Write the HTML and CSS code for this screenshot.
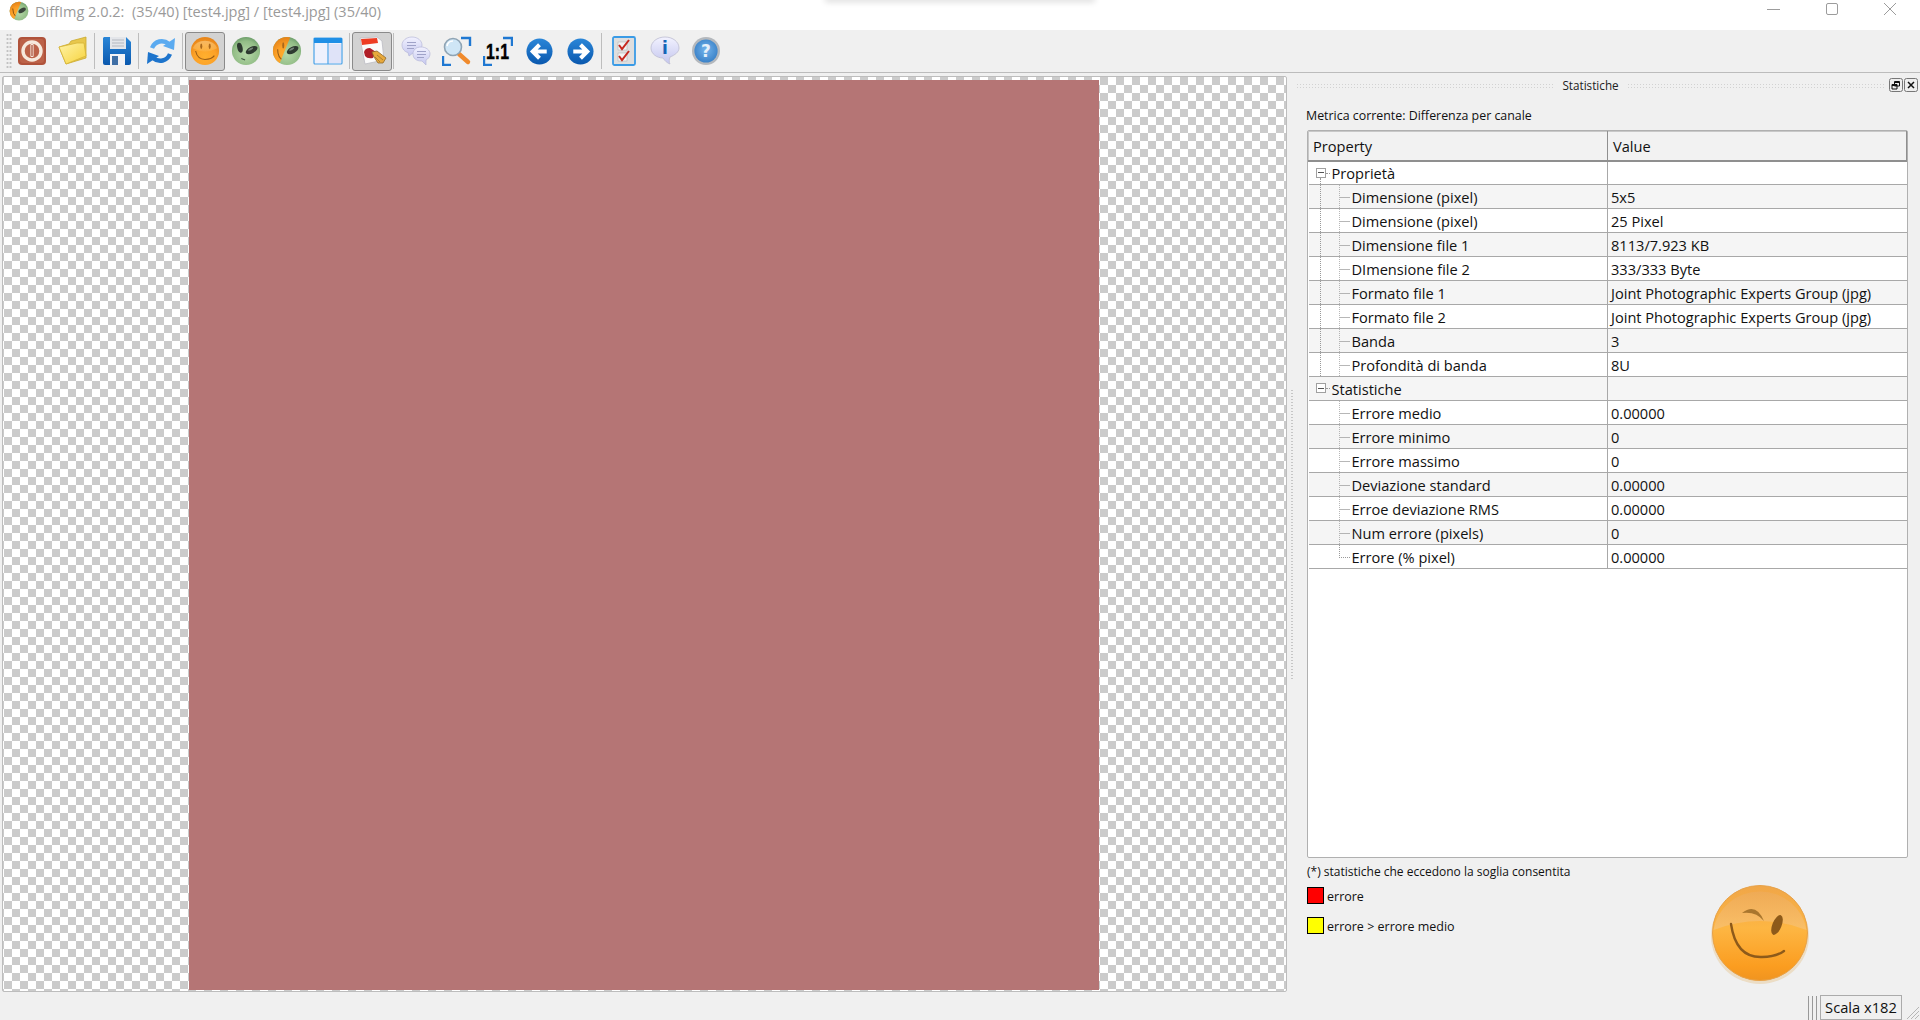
FILE: index.html
```html
<!DOCTYPE html>
<html lang="it">
<head>
<meta charset="utf-8">
<title>DiffImg</title>
<link rel="stylesheet" href="styles.css">
</head>
<body>
<svg class="defs" aria-hidden="true">
  <defs>
    <radialGradient id="gSmile" cx="50%" cy="70%" r="65%"><stop offset="0" stop-color="#ffb02e"/><stop offset=".6" stop-color="#fca128"/><stop offset="1" stop-color="#e8861a"/></radialGradient>
    <linearGradient id="gShine" x1="0" y1="0" x2="0" y2="1"><stop offset="0" stop-color="#fbd79a"/><stop offset="1" stop-color="#fbb44a"/></linearGradient>
    <radialGradient id="gAlien" cx="50%" cy="60%" r="65%"><stop offset="0" stop-color="#b6d8a8"/><stop offset=".7" stop-color="#92bd86"/><stop offset="1" stop-color="#5f9361"/></radialGradient>
    <linearGradient id="gFolder" x1="0" y1="0" x2="1" y2="1"><stop offset="0" stop-color="#fff3a8"/><stop offset="1" stop-color="#f7d33c"/></linearGradient>
    <linearGradient id="gBlue" x1="0" y1="0" x2="0" y2="1"><stop offset="0" stop-color="#2a86d8"/><stop offset="1" stop-color="#0a58ae"/></linearGradient>
    <linearGradient id="gLilac" x1="0" y1="0" x2="0" y2="1"><stop offset="0" stop-color="#f2f2ff"/><stop offset="1" stop-color="#c4c6ee"/></linearGradient>
    <radialGradient id="gHelp" cx="50%" cy="45%" r="55%"><stop offset="0" stop-color="#74b4ec"/><stop offset="1" stop-color="#3b82c8"/></radialGradient>
    <linearGradient id="gBig" x1="0" y1="0" x2="0" y2="1"><stop offset="0" stop-color="#f0a648"/><stop offset=".45" stop-color="#fdb643"/><stop offset=".85" stop-color="#fb9d20"/><stop offset="1" stop-color="#f09420"/></linearGradient>
    <linearGradient id="gBigTop" x1="0" y1="0" x2="0" y2="1"><stop offset="0" stop-color="#eeab5a"/><stop offset="1" stop-color="#f8c274"/></linearGradient>
    <clipPath id="cHalfL"><path d="M0 0 H20 L7 32 H0Z"/></clipPath>
  </defs>
</svg>

<div class="app">
  <header class="titlebar">
    <svg class="title-icon" viewBox="0 0 32 32">
      <circle cx="16" cy="16" r="15" fill="url(#gAlien)"/>
      <g clip-path="url(#cHalfL)"><circle cx="16" cy="16" r="15" fill="url(#gSmile)"/><path d="M6 12 Q6 21 11 25" fill="none" stroke="#8a5412" stroke-width="1.6"/></g>
      <ellipse cx="21" cy="15" rx="6.5" ry="3.4" transform="rotate(-30 21 15)" fill="#3b463c"/>
    </svg>
    <span class="title-text">DiffImg 2.0.2:  (35/40) [test4.jpg] / [test4.jpg] (35/40)</span>
    <div class="win-controls">
      <svg class="win-btn" viewBox="0 0 14 14"><path d="M0 7.5H13" stroke="#9c9c9c" fill="none"/></svg>
      <svg class="win-btn" viewBox="0 0 14 14"><rect x="1.5" y="1.5" width="11" height="11" rx="1.5" stroke="#9c9c9c" fill="none"/></svg>
      <svg class="win-btn" viewBox="0 0 14 14"><path d="M1 1L13 13M13 1L1 13" stroke="#9c9c9c" fill="none"/></svg>
    </div>
  </header>

  <nav class="toolbar">
    <span class="grip"></span>
    <button class="tool"><svg class="ico" viewBox="0 0 30 30">
      <rect x="1" y="1" width="28" height="28" rx="4" fill="#b0533b"/><rect x="3" y="3" width="24" height="24" rx="3" fill="#bc6248"/>
      <circle cx="15" cy="15" r="9" fill="none" stroke="#f6e9dc" stroke-width="3.4"/><rect x="13.4" y="8" width="3.2" height="13" rx="1" fill="#f6e9dc"/><rect x="14.4" y="9" width="1.2" height="11" fill="#a54a32"/>
    </svg></button>
    <button class="tool"><svg class="ico" viewBox="0 0 30 30">
      <path d="M1 11 L11 8 L13 5 L28 1 L28 22 L8 28Z" fill="#e8c74c" stroke="#c9a92e" stroke-width=".8"/>
      <path d="M1 11 L19 7 L26 7 L28 20 L8 28Z" fill="url(#gFolder)" stroke="#d6b436" stroke-width=".8"/>
    </svg></button>
    <span class="sep"></span>
    <button class="tool"><svg class="ico" viewBox="0 0 30 30">
      <path d="M2 1H24L29 6V27a2 2 0 0 1-2 2H3a2 2 0 0 1-2-2V2Z" fill="url(#gBlue)"/>
      <rect x="8" y="1" width="16" height="12" fill="#e4e6ea"/><path d="M10 4H22M10 7H22M10 10H22" stroke="#b4b8c0"/>
      <rect x="8" y="18" width="15" height="11" fill="#f3f3f6"/><rect x="10" y="20" width="6" height="9" fill="#3f6fa6"/>
    </svg></button>
    <span class="sep"></span>
    <button class="tool"><svg class="ico" viewBox="0 0 30 30" fill="none">
      <path d="M6 12 C9 5 17 3 23 8" stroke="#5aaaf0" stroke-width="4.4"/><path d="M29 2 L28 14 L17 10Z" fill="#5aaaf0"/>
      <path d="M24 18 C21 25 13 27 7 22" stroke="#1d74cc" stroke-width="4.4"/><path d="M1 28 L2 16 L13 20Z" fill="#1d74cc"/>
    </svg></button>
    <span class="sep"></span>
    <button class="tool on"><svg class="ico" viewBox="0 0 32 32">
      <circle cx="16" cy="16" r="15" fill="url(#gSmile)"/><path d="M3 13 A13.5 11 0 0 1 29 13 Q16 20 3 13Z" fill="url(#gShine)" opacity=".55"/>
      <ellipse cx="12" cy="11" rx="1.1" ry="3" fill="#a9671c"/><ellipse cx="21" cy="11" rx="1.1" ry="3" fill="#a9671c"/>
      <path d="M6 16 Q8 25 16 25 Q23 25 26 21" fill="none" stroke="#9b5e16" stroke-width="1.2"/>
    </svg></button>
    <button class="tool"><svg class="ico" viewBox="0 0 32 32">
      <circle cx="16" cy="16" r="15" fill="url(#gAlien)"/>
      <ellipse cx="9.5" cy="12.5" rx="2.8" ry="5.4" transform="rotate(-14 9.5 12.5)" fill="#2e3a30"/>
      <ellipse cx="22" cy="15" rx="6.8" ry="3.5" transform="rotate(-28 22 15)" fill="#2e3a30"/><ellipse cx="21" cy="14" rx="3" ry="1" transform="rotate(-28 21 14)" fill="#77857a"/>
      <path d="M11 24 L15 25.5" stroke="#3c4d3e" stroke-width="1.1"/>
    </svg></button>
    <button class="tool"><svg class="ico" viewBox="0 0 32 32">
      <circle cx="16" cy="16" r="15" fill="url(#gAlien)"/>
      <g clip-path="url(#cHalfL)"><circle cx="16" cy="16" r="15" fill="url(#gSmile)"/>
      <path d="M6 14 Q6 23 12 26" fill="none" stroke="#9b5e16" stroke-width="1.2"/><ellipse cx="12" cy="10" rx="1.1" ry="3.4" fill="#a9671c"/></g>
      <ellipse cx="22" cy="15" rx="6.8" ry="3.5" transform="rotate(-28 22 15)" fill="#2e3a30"/><ellipse cx="21" cy="14" rx="3" ry="1" transform="rotate(-28 21 14)" fill="#77857a"/>
    </svg></button>
    <button class="tool"><svg class="ico" viewBox="0 0 30 30">
      <rect x="1" y="2" width="28" height="26" rx="1" fill="#eef1fd" stroke="#4aa3e8" stroke-width="1.2"/>
      <rect x="1" y="2" width="28" height="5" fill="#1f8fe6"/><path d="M15 7V28" stroke="#4aa3e8" stroke-width="1.2"/>
      <rect x="16" y="8" width="12" height="19" fill="#dfe3f8"/>
    </svg></button>
    <span class="sep"></span>
    <button class="tool on"><svg class="ico" viewBox="0 0 30 30">
      <path d="M3 2 L20 1 L25 5 L27 24 L8 28Z" fill="#fbfbfb" stroke="#bcbcc4" stroke-width=".8"/>
      <path d="M4 3 L20 2 L21 7 L5 9Z" fill="#ee3d24"/>
      <path d="M7 16 Q8 12 13 12 L19 16 L16 22 Q10 23 8 20Z" fill="#b01f28"/>
      <path d="M15 16 L20 15 L29 22 L26 27 L21 27 L17 21Z" fill="#e8a93c" stroke="#8f6a2c" stroke-width=".8"/>
      <path d="M20 19L26 24M18 21L23 26" stroke="#9a7430" stroke-width=".8"/>
    </svg></button>
    <span class="sep"></span>
    <button class="tool"><svg class="ico" viewBox="0 0 30 30">
      <path d="M11 1C5 1 1 5 1 9s3 7 6 7.5L8 20l4-3c5 0 9-4 9-8s-4-8-10-8Z" fill="url(#gLilac)" stroke="#b6b8d8" stroke-width=".7"/>
      <path d="M6 6.5H15M6 9.5H15M6 12.5H13" stroke="#9fa2c8"/>
      <path d="M20 11c-5 0-8 3-8 7s3 7 8 7l1 0 4 4 0-5c2-1 4-3 4-6 0-4-4-7-9-7Z" fill="url(#gLilac)" stroke="#b6b8d8" stroke-width=".7"/>
      <path d="M16 15.5H25M16 18.5H25M16 21.5H23" stroke="#9fa2c8"/>
    </svg></button>
    <button class="tool"><svg class="ico" viewBox="0 0 30 30" fill="none">
      <path d="M19 2H28V10M1 20V29H9" stroke="#1f78d2" stroke-width="2.4"/>
      <path d="M17 18 L26 26" stroke="#f08a2c" stroke-width="4.4" stroke-linecap="round"/>
      <circle cx="11" cy="11" r="8.5" fill="#cfe6f6" stroke="#8fa4b4" stroke-width="1.6"/><path d="M5 10a6 6 0 0 1 6-5" stroke="#fff" stroke-width="1.6"/>
    </svg></button>
    <button class="tool"><svg class="ico" viewBox="0 0 30 30" fill="none">
      <path d="M20 2H29V10M1 20V29H9" stroke="#1f78d2" stroke-width="2.4"/>
      <text class="one-one" transform="translate(14.5 23) scale(.72 1)" text-anchor="middle">1:1</text>
    </svg></button>
    <button class="tool"><svg class="ico ico-nav" viewBox="0 0 28 28">
      <circle cx="14" cy="14" r="13.5" fill="url(#gBlue)"/><path d="M21.5 14H8M14 7L7 14l7 7" fill="none" stroke="#fff" stroke-width="4.2"/>
    </svg></button>
    <button class="tool"><svg class="ico ico-nav" viewBox="0 0 28 28">
      <circle cx="14" cy="14" r="13.5" fill="url(#gBlue)"/><path d="M6.5 14H20M14 7l7 7-7 7" fill="none" stroke="#fff" stroke-width="4.2"/>
    </svg></button>
    <span class="sep"></span>
    <button class="tool"><svg class="ico ico-check" viewBox="0 0 24 30" fill="none">
      <rect x="1" y="1" width="22" height="28" rx="1.5" fill="#dedede" stroke="#3a9be6" stroke-width="1.8"/>
      <rect x="6" y="6" width="9" height="8" fill="#f2f2f2" stroke="#aaa" stroke-width=".5"/><rect x="6" y="17" width="9" height="8" fill="#f2f2f2" stroke="#aaa" stroke-width=".5"/>
      <path d="M7 9L10 13L17 4M7 20L10 24L17 15" stroke="#c6281e" stroke-width="2"/>
    </svg></button>
    <button class="tool"><svg class="ico" viewBox="0 0 30 30">
      <path d="M15 1C7 1 1 6 1 12c0 6 6 10 12 10 2 3 4 5 7 6-1-2-1-4 0-7 5-2 9-5 9-9 0-6-6-11-14-11Z" fill="url(#gLilac)" stroke="#bcbcd2" stroke-width=".8"/>
      <text class="info-i" x="15" y="18" text-anchor="middle">i</text>
    </svg></button>
    <button class="tool"><svg class="ico" viewBox="0 0 30 30">
      <circle cx="15" cy="15" r="14" fill="#b4b8bd"/><circle cx="15" cy="15" r="11.6" fill="url(#gHelp)"/>
      <text class="help-q" x="15" y="21" text-anchor="middle">?</text>
    </svg></button>
  </nav>

  <main class="main">
    <section class="canvas"><div class="picture"></div></section>
    <div class="splitter"><span class="splitter-dots"></span></div>
    <aside class="dock">
      <div class="dock-title">
        <span class="hatch"></span><span class="dock-name">Statistiche</span><span class="hatch"></span>
        <svg class="dock-btn" viewBox="0 0 14 14"><rect x=".5" y=".5" width="13" height="13" rx="2" fill="#eee" stroke="#777"/><path d="M5.5 3.5h5v4.5h-5zM5.5 4.5h5M3 6.5h5v4.5H3zM3 7.5h5" fill="#eee" stroke="#111"/></svg>
        <svg class="dock-btn" viewBox="0 0 14 14"><rect x=".5" y=".5" width="13" height="13" rx="2" fill="#eee" stroke="#777"/><path d="M4 4l6 6M10 4l-6 6" fill="none" stroke="#111" stroke-width="1.5"/></svg>
      </div>
      <p class="metric">Metrica corrente: Differenza per canale</p>
      <div class="grid">
        <table>
          <colgroup><col class="col-a"><col></colgroup>
          <thead><tr><th>Property</th><th>Value</th></tr></thead>
          <tbody>
            <tr class="root"><td><span class="box"></span>Proprietà</td><td></td></tr>
            <tr class="kid"><td>Dimensione (pixel)</td><td>5x5</td></tr>
            <tr class="kid"><td>Dimensione (pixel)</td><td>25 Pixel</td></tr>
            <tr class="kid"><td>Dimensione file 1</td><td>8113/7.923 KB</td></tr>
            <tr class="kid"><td>DImensione file 2</td><td>333/333 Byte</td></tr>
            <tr class="kid"><td>Formato file 1</td><td>Joint Photographic Experts Group (jpg)</td></tr>
            <tr class="kid"><td>Formato file 2</td><td>Joint Photographic Experts Group (jpg)</td></tr>
            <tr class="kid"><td>Banda</td><td>3</td></tr>
            <tr class="kid"><td>Profondità di banda</td><td>8U</td></tr>
            <tr class="root last-root"><td><span class="box"></span>Statistiche</td><td></td></tr>
            <tr class="kid"><td>Errore medio</td><td>0.00000</td></tr>
            <tr class="kid"><td>Errore minimo</td><td>0</td></tr>
            <tr class="kid"><td>Errore massimo</td><td>0</td></tr>
            <tr class="kid"><td>Deviazione standard</td><td>0.00000</td></tr>
            <tr class="kid"><td>Erroe deviazione RMS</td><td>0.00000</td></tr>
            <tr class="kid"><td>Num errore (pixels)</td><td>0</td></tr>
            <tr class="kid last-kid"><td>Errore (% pixel)</td><td>0.00000</td></tr>
          </tbody>
        </table>
      </div>
      <div class="dock-foot">
        <div class="legend">
          <p class="note">(*) statistiche che eccedono la soglia consentita</p>
          <div class="key"><span class="swatch red"></span><span class="key-text">errore</span></div>
          <div class="key"><span class="swatch yellow"></span><span class="key-text">errore &gt; errore medio</span></div>
        </div>
        <svg class="big-smile" viewBox="0 0 100 100">
          <ellipse cx="50" cy="52" rx="49" ry="48" fill="#e8c99a" opacity=".5"/>
          <circle cx="50" cy="49" r="47.5" fill="url(#gBig)" stroke="#e7a24a" stroke-width="1"/>
          <path d="M3.5 46 A47 45 0 0 1 96.5 46 Q50 28 3.5 46Z" fill="url(#gBigTop)" opacity=".75"/>
          <path d="M32 29 Q46 18 54 37 Q46 27 32 29Z" fill="#a9762e"/>
          <ellipse cx="67" cy="41" rx="4.6" ry="10.5" transform="rotate(22 67 41)" fill="#8d5a1a"/>
          <path d="M21 40 Q26 74 52 73 Q66 73 74 67" fill="none" stroke="#8d5a1a" stroke-width="2.4" stroke-linecap="round"/>
        </svg>
      </div>
    </aside>
  </main>

  <footer class="status">
    <span class="status-grip"></span>
    <span class="scale">Scala x182</span>
    <svg class="size-grip" viewBox="0 0 15 15"><path d="M14 2L2 14M14 6L6 14M14 10L10 14" stroke="#b5b5b5" fill="none"/></svg>
  </footer>
</div>
</body>
</html>
```
FILE: styles.css
```css
* { box-sizing: border-box; }
html, body { margin: 0; padding: 0; height: 100%; overflow: hidden; }
body { font-family: "Open Sans", "Noto Sans", sans-serif; color: #111; background: #f0f0f0; }
.defs { display: block; width: 0; height: 0; }
p { margin: 0; }

.app { width: 1920px; height: 1020px; display: flex; flex-direction: column; overflow: hidden; }

.titlebar { height: 30px; flex: none; background: #fff; display: flex; align-items: center; padding-left: 9px; padding-bottom: 8px; position: relative; }
.titlebar::before { content: ""; position: absolute; left: 825px; width: 270px; top: -6px; height: 6px; box-shadow: 0 2px 6px rgba(0, 0, 0, .14); }
.title-icon { width: 20px; height: 20px; flex: none; }
.title-text { margin-left: 6px; font-size: 14.5px; color: #9a9a9a; white-space: pre; }
.win-controls { margin-left: auto; display: flex; gap: 44px; padding-right: 23px; padding-bottom: 4px; }
.win-btn { width: 14px; height: 14px; display: block; }

.toolbar { height: 43px; flex: none; display: flex; align-items: center; padding-left: 6px; background: #f0f0f0; border-bottom: 1px solid #bcbcbc; }
.grip { width: 6px; height: 36px; flex: none; background: radial-gradient(circle, #c2c2c2 1px, transparent 1.2px) 0 0 / 3px 4px; }
.tool { width: 41px; height: 39px; flex: none; padding: 0; margin: 0; border: 1px solid transparent; border-right-width: 2px; background: transparent; display: flex; align-items: center; justify-content: center; border-radius: 3px; }
.tool.on { background: #d2d2d2; border: 1px solid #8a8a8a; margin-right: 1px; width: 40px; }
.ico { width: 30px; height: 30px; display: block; }
.ico-nav { width: 27px; height: 27px; }
.ico-check { width: 24px; height: 30px; }
.sep { width: 3px; height: 36px; flex: none; border-left: 1px solid #bdbdbd; }
.one-one { font-family: "Liberation Sans", sans-serif; font-weight: 700; font-size: 22px; fill: #000; stroke: #000; stroke-width: .5px; }
.info-i { font-family: "DejaVu Sans", sans-serif; font-weight: 700; font-size: 17px; fill: #1565b8; }
.help-q { font-family: "DejaVu Sans", sans-serif; font-weight: 700; font-size: 17px; fill: #e6f0fa; }

.main { flex: 1; min-height: 0; display: flex; padding-top: 3px; }
.canvas { width: 1285px; margin-left: 2px; flex: none; display: flex; align-items: center; justify-content: center; padding: 2px 1px 0 0; border: 1px solid #bdbdbd; border-radius: 2px; background-color: #fff; background-image: conic-gradient(#cbcbcb 25%, #fff 0 50%, #cbcbcb 0 75%, #fff 0); background-size: 16px 16px; background-position: 1px 0; }
.picture { width: 910px; height: 910px; flex: none; background: #b57575; }
.splitter { width: 9px; flex: none; display: flex; align-items: center; justify-content: center; }
.splitter-dots { width: 2px; height: 290px; background: radial-gradient(circle, #c6c6c6 .9px, transparent 1px) 0 0 / 2px 3px; }

.dock { flex: 1; min-width: 0; display: flex; flex-direction: column; }
.dock-title { height: 18px; flex: none; display: flex; align-items: center; gap: 0; padding-right: 2px; }
.hatch { flex: 1; height: 5px; background: radial-gradient(circle, #d2d2d2 .8px, transparent 1px) 0 0 / 3px 3px; }
.dock-name { font-size: 11.7px; padding: 0 8px; color: #222; }
.dock-btn { width: 14px; height: 14px; flex: none; display: block; margin-left: 1px; }
.hatch + .dock-btn { margin-left: 4px; }

.metric { font-size: 12.4px; line-height: 16px; margin: 14px 0 6px 10px; }

.grid { flex: 1; min-height: 0; margin: 0 12px 0 11px; width: 601px; background: #fff; border: 1px solid #b0b0b0; border-radius: 2px; padding: 0; }
table { width: 100%; border-collapse: collapse; table-layout: fixed; font-size: 14.6px; }
.col-a { width: 299px; }
th { height: 29px; padding: 0 0 0 5px; text-align: left; font-weight: 400; background: #f2f2f2; border: 1px solid #8f8f8f; border-top-color: #c8c8c8; border-left-color: #c8c8c8; border-bottom-width: 2px; }
th:first-child { padding-left: 4px; }
td { height: 24px; padding: 0 0 0 3px; border-bottom: 1px solid #a8a8a8; white-space: nowrap; overflow: hidden; }
td:first-child { border-right: 1px solid #a8a8a8; position: relative; }
tbody tr:nth-child(even) { background: #f5f5f5; }
.root td:first-child { padding-left: 23px; }
.kid td:first-child { padding-left: 43px; }
.kid td:first-child::before { content: ""; position: absolute; left: 11px; top: 0; bottom: 0; border-left: 1px dotted #999; }
.last-root ~ .kid td:first-child::before { display: none; }
.kid td:first-child::after { content: ""; position: absolute; left: 30px; top: 0; width: 10px; height: 12px; border-left: 1px dotted #999; border-bottom: 1px dotted #999; }
.kid:not(.last-kid) td:first-child::after { height: 100%; border-bottom: 0; background: linear-gradient(#999, #999) 0 12px / 10px 1px no-repeat; opacity: .7; }
.box { position: absolute; left: 7px; top: 6px; width: 10px; height: 10px; border: 1px solid #a0a0a0; background: linear-gradient(#555, #555) center / 6px 1px no-repeat #fff; }
.root td:first-child::after { content: ""; position: absolute; left: 17px; top: 11px; width: 4px; border-top: 1px dotted #999; }
.root:not(.last-root) td:first-child::before { content: ""; position: absolute; left: 11px; top: 16px; bottom: 0; border-left: 1px dotted #999; }

.dock-foot { flex: none; height: 134px; display: flex; align-items: flex-start; padding-left: 11px; }
.legend { flex: 1; font-size: 12px; }
.note { line-height: 16px; margin-top: 6px; }
.key { display: flex; align-items: center; gap: 3px; height: 17px; margin-top: 7px; }
.key + .key { margin-top: 13px; }
.key-text { font-size: 12.5px; position: relative; top: 1px; }
.swatch { width: 17px; height: 17px; flex: none; border: 1px solid #000; }
.red { background: #f00; }
.yellow { background: #ff0; }
.big-smile { width: 100px; height: 100px; flex: none; margin: 26px 110px 0 0; }

.status { height: 28px; flex: none; display: flex; align-items: flex-end; justify-content: flex-end; }
.status-grip { width: 9px; height: 24px; margin-right: 3px; border-left: 1px solid #999; border-right: 1px solid #999; background: linear-gradient(#999, #999) center / 1px 100% no-repeat; }
.scale { width: 82px; height: 25px; line-height: 23px; text-align: center; font-size: 14.7px; border: 1px solid #ababab; }
.size-grip { width: 15px; height: 15px; margin-left: 3px; display: block; }
```
